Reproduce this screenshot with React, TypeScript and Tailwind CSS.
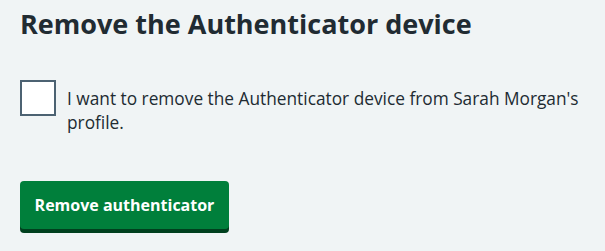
export default function App() {
  return (
    <div className="w-[605px] h-[251px] bg-[#f0f4f5] text-[#212b32] pl-[20px] pt-[4px]" style={{ fontFamily: '"Open Sans", "Noto Sans", sans-serif' }}>
      <h1 className="text-[27px] leading-[40px] font-bold m-0">Remove the Authenticator device</h1>
      <div className="mt-[36px] flex items-start gap-[11px]">
        <div className="w-[36px] h-[36px] border-2 border-[#4c6272] bg-white shrink-0" />
        <p className="text-[17.3px] leading-[24px] pt-[7px] pr-[10px]">
          I want to remove the Authenticator device from Sarah Morgan's profile.
        </p>
      </div>
      <button className="mt-[46px] w-[209px] h-[48px] bg-[#007f3b] text-white font-bold text-[16px] rounded-[4px] shadow-[0_4px_0_#00401e]">
        Remove authenticator
      </button>
    </div>
  );
}
